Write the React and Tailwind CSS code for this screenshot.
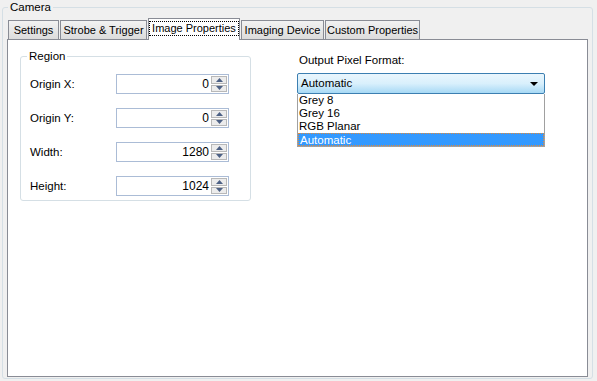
import { useState } from 'react'

const tabs = ['Settings', 'Strobe & Trigger', 'Image Properties', 'Imaging Device', 'Custom Properties']
const tabWidths = ['w-[51px]', 'w-[87px]', 'w-[92px]', 'w-[83px]', 'w-[95px]']

const fields = [
  { label: 'Origin X:', value: '0' },
  { label: 'Origin Y:', value: '0' },
  { label: 'Width:', value: '1280' },
  { label: 'Height:', value: '1024' },
]

const formats = ['Grey 8', 'Grey 16', 'RGB Planar', 'Automatic']

function Spinner({ value }) {
  return (
    <div className="flex h-[20px] w-[113px] items-center border border-[#abbcd6] bg-white pr-[1px]">
      <span className="flex-1 pr-[2px] text-right text-[12px]">{value}</span>
      <div className="flex h-[16px] w-[16px] flex-col gap-[1px]">
        <div className="flex flex-1 items-center justify-center border border-[#b8b8b8] bg-[#ececec]">
          <svg width="7" height="4" viewBox="0 0 7 4">
            <path d="M3.5 0 L7 4 L0 4 Z" fill="#4d6185" />
          </svg>
        </div>
        <div className="flex flex-1 items-center justify-center border border-[#b8b8b8] bg-[#ececec]">
          <svg width="7" height="4" viewBox="0 0 7 4">
            <path d="M0 0 L7 0 L3.5 4 Z" fill="#4d6185" />
          </svg>
        </div>
      </div>
    </div>
  )
}

export default function App() {
  const [active] = useState(2)

  return (
    <div className="h-[381px] w-[597px] whitespace-nowrap bg-[#f0f0f0] pl-[2px] pt-[1px] text-[11.5px] leading-[13px] text-black [font-family:'Liberation_Sans',Arial,sans-serif]">
      {/* Camera group */}
      <div className="relative mt-[6px] h-[372px] w-[591px] rounded-[3px] border border-[#d5dfe5] px-[4px] pt-[10px]">
        <span className="absolute left-[5px] top-[-7px] bg-[#f0f0f0] px-[2px]">Camera</span>

        {/* tab strip */}
        <div className="flex h-[21px] items-end pl-[1px] text-[11px]">
          {tabs.map((tab, i) =>
            i === active ? (
              <div
                key={tab}
                className={`${tabWidths[i]} relative z-10 -mb-px mr-[1px] flex h-[22px] items-start justify-center border border-b-0 border-[#898c95] bg-white pt-[2px]`}
              >
                <span className="border border-dotted border-black px-[2px] leading-[13px]">{tab}</span>
              </div>
            ) : (
              <div
                key={tab}
                className={`${tabWidths[i]} mr-[1px] flex h-[19px] items-center justify-center border border-b-0 border-[#898c95] bg-gradient-to-b from-[#f2f2f2] to-[#dcdcdc] pt-[1px]`}
              >
                {tab}
              </div>
            ),
          )}
        </div>

        {/* tab page */}
        <div className="flex h-[338px] w-[581px] items-start border border-[#898c95] bg-white pl-[12px] pt-[16px]">
          {/* Region group */}
          <div className="relative h-[145px] w-[231px] rounded-[3px] border border-[#d5dfe5] pl-[9px] pt-[17px]">
            <span className="absolute left-[6px] top-[-7px] bg-white px-[2px]">Region</span>
            <div className="flex flex-col gap-[14px]">
              {fields.map((f) => (
                <div key={f.label} className="flex items-center">
                  <span className="w-[86px]">{f.label}</span>
                  <Spinner value={f.value} />
                </div>
              ))}
            </div>
          </div>

          {/* Output pixel format */}
          <div className="ml-[46px] mt-[-2px] flex flex-col">
            <span className="mb-[6px] ml-[2px]">Output Pixel Format:</span>
            <div className="flex h-[21px] w-[248px] items-center justify-between rounded-[2px] border border-[#3c7fb1] bg-gradient-to-b from-[#eaf6fd] via-[#d9f0fc] to-[#a7d9f5] pl-[3px] pr-[6px]">
              <span>Automatic</span>
              <svg width="8" height="4" viewBox="0 0 8 4">
                <path d="M0 0 L8 0 L4 4 Z" fill="#000" />
              </svg>
            </div>
            <div className="flex w-[248px] flex-col border border-t-0 border-[#a0a0a0] bg-white">
              {formats.map((f) => (
                <div
                  key={f}
                  className={`h-[13px] pl-[1px] leading-[12px] ${
                    f === 'Automatic' ? 'border border-dotted border-[#e08a3c] bg-[#3399ff] pl-0 text-white' : ''
                  }`}
                >
                  {f}
                </div>
              ))}
            </div>
          </div>
        </div>
      </div>
    </div>
  )
}
